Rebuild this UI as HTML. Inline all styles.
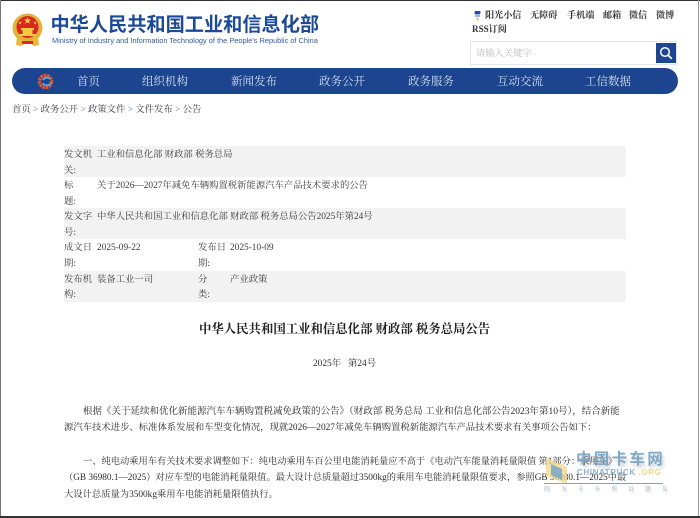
<!DOCTYPE html>
<html lang="zh"><head><meta charset="utf-8"><style>
html,body{margin:0;padding:0;background:#fff}
#p{position:relative;width:700px;height:518px;overflow:hidden;background:#fff;font-family:"Liberation Serif","Noto Serif CJK SC",serif;color:#333}
#p div{position:absolute;white-space:nowrap}
.t{font-size:9.35px;line-height:12px;color:#3c3c3c}
.b{font-size:9.35px;line-height:12px;color:#2c2c2c}
.n{font-size:11.5px;line-height:14px;color:#d5deef;top:75px}
.r{height:31px;left:64px;width:562px;background:#f2f2f2}
.h{font-size:9.1px;line-height:12px;color:#333;font-weight:bold;top:9px}
</style></head><body><div id="p">
<div style="left:0;top:0;width:700px;height:1px;background:#333"></div>
<div style="left:0;top:0;width:1px;height:518px;background:#777"></div>
<div style="left:698px;top:0;width:1px;height:518px;background:#999"></div>
<div style="left:0;top:516px;width:700px;height:2px;background:#333"></div>

<svg style="position:absolute;left:12px;top:13px" width="31" height="34" viewBox="0 0 31 34">
<ellipse cx="15.5" cy="15" rx="15" ry="14.5" fill="#e3b23c"/>
<ellipse cx="15.5" cy="14" rx="11" ry="11" fill="#d8281f"/>
<path d="M15.5 4l1 2.6h2.7l-2.2 1.6.8 2.6-2.3-1.6-2.3 1.6.8-2.6-2.2-1.6h2.7zM8 8l.5 1.3h1.4l-1.1.8.4 1.3-1.2-.8-1.1.8.4-1.3-1.1-.8h1.4zM23 8l.5 1.3h1.4l-1.1.8.4 1.3-1.2-.8-1.1.8.4-1.3-1.1-.8h1.4z" fill="#f2cf4c"/>
<path d="M9 15h13v2h-13zM10.500 17h10v4h-10zM7 21h17v2h-17z" fill="#f0c947"/>
<path d="M5 24l5 3h11l5-3 1 8-5 1-3-2h-7l-3 2-5-1z" fill="#e8b83a"/>
<path d="M10 28h11v3h-11z" fill="#d8281f"/>
</svg>
<div style="left:50.500px;top:13px;font:bold 19.2px/26px 'Liberation Sans','Noto Sans CJK SC',sans-serif;color:#1d4a96">中华人民共和国工业和信息化部</div>
<div style="left:52px;top:36px;font:7.4px/10px 'Liberation Sans',sans-serif;color:#2f5ba5">Ministry of Industry and Information Technology of the People's Republic of China</div>

<svg style="position:absolute;left:473px;top:9px" width="9" height="13" viewBox="0 0 9 13"><rect x="1.500" y="2" width="6" height="3" rx="1" fill="#2646b8"/><rect x="2" y="5" width="5" height="3" fill="#9db8e0"/><path d="M3 9h3l-1 3h-1z" fill="#e8c98a"/></svg>
<div class="h" style="left:485px">阳光小信</div>
<div class="h" style="left:530px">无障碍</div>
<div class="h" style="left:567px">手机端</div>
<div class="h" style="left:603px">邮箱</div>
<div class="h" style="left:629px">微信</div>
<div class="h" style="left:656px">微博</div>
<div class="h" style="left:472px;top:23px">RSS订阅</div>

<div style="left:470px;top:41px;width:207px;height:24px;border:1px solid #e6e6e6;box-sizing:border-box;background:#fff"></div>
<div style="left:476px;top:48px;font-size:9.3px;line-height:12px;color:#bbb">请输入关键字</div>
<div style="left:656px;top:43px;width:20px;height:20px;background:#1d4590"></div>
<svg style="position:absolute;left:658px;top:45px" width="16" height="16" viewBox="0 0 16 16"><circle cx="7" cy="7" r="4.3" fill="none" stroke="#fff" stroke-width="1.500"/><path d="M10.200 10.200l3.500 3.500" stroke="#fff" stroke-width="1.800"/></svg>

<div style="left:12px;top:68px;width:666px;height:26px;border-radius:13px;background:#1c448f"></div>
<svg style="position:absolute;left:37px;top:73px" width="18" height="17" viewBox="0 0 18 17"><circle cx="8.500" cy="8.500" r="6" fill="none" stroke="#e4572a" stroke-width="3.500" stroke-dasharray="2.500 .8"/><path d="M6 10c1 3 6 3 8 0M6 7c2-3 5-3 7-1" fill="none" stroke="#5fa8e0" stroke-width="1.800"/></svg>
<div class="n" style="left:77px">首页</div>
<div class="n" style="left:142px">组织机构</div>
<div class="n" style="left:231px">新闻发布</div>
<div class="n" style="left:319px">政务公开</div>
<div class="n" style="left:408px">政务服务</div>
<div class="n" style="left:497px">互动交流</div>
<div class="n" style="left:585px">工信数据</div>

<div class="b" style="left:12px;top:104px;font-size:9.35px;color:#3c3c3c">首页 <span style="color:#5a7fc0">&gt;</span> 政务公开 <span style="color:#5a7fc0">&gt;</span> 政策文件 <span style="color:#5a7fc0">&gt;</span> 文件发布 <span style="color:#5a7fc0">&gt;</span> 公告</div>

<div class="r" style="top:146px"></div>
<div class="r" style="top:208px"></div>
<div class="r" style="top:271px"></div>

<div class="t" style="left:64px;top:149px">发文机</div><div class="t" style="left:64px;top:165px">关:</div>
<div class="t" style="left:97px;top:149px">工业和信息化部 财政部 税务总局</div>
<div class="t" style="left:64px;top:180px">标</div><div class="t" style="left:64px;top:196px">题:</div>
<div class="t" style="left:97px;top:180px">关于2026—2027年减免车辆购置税新能源汽车产品技术要求的公告</div>
<div class="t" style="left:64px;top:211px">发文字</div><div class="t" style="left:64px;top:227px">号:</div>
<div class="t" style="left:97px;top:211px">中华人民共和国工业和信息化部 财政部 税务总局公告2025年第24号</div>
<div class="t" style="left:64px;top:242px">成文日</div><div class="t" style="left:64px;top:258px">期:</div>
<div class="t" style="left:97px;top:242px">2025-09-22</div>
<div class="t" style="left:198px;top:242px">发布日</div><div class="t" style="left:198px;top:258px">期:</div>
<div class="t" style="left:230px;top:242px">2025-10-09</div>
<div class="t" style="left:64px;top:274px">发布机</div><div class="t" style="left:64px;top:289px">构:</div>
<div class="t" style="left:97px;top:274px">装备工业一司</div>
<div class="t" style="left:198px;top:274px">分</div><div class="t" style="left:198px;top:289px">类:</div>
<div class="t" style="left:230px;top:274px">产业政策</div>

<div style="left:199px;top:321px;font-size:12.4px;line-height:16px;font-weight:bold;color:#222">中华人民共和国工业和信息化部 财政部 税务总局公告</div>
<div class="b" style="left:313px;top:358px">2025年&nbsp;&nbsp;&nbsp;第24号</div>

<div class="b" style="left:83px;top:406px;font-size:9.5px">根据《关于延续和优化新能源汽车车辆购置税减免政策的公告》（财政部 税务总局 工业和信息化部公告2023年第10号），结合新能</div>
<div class="b" style="left:64px;top:422px;font-size:9.35px">源汽车技术进步、标准体系发展和车型变化情况，现就2026—2027年减免车辆购置税新能源汽车产品技术要求有关事项公告如下：</div>
<div class="b" style="left:83px;top:456px;font-size:9.25px">一、纯电动乘用车有关技术要求调整如下：纯电动乘用车百公里电能消耗量应不高于《电动汽车能量消耗量限值 第1部分：乘用车》</div>
<div class="b" style="left:64px;top:472px;font-size:9.25px">（GB 36980.1—2025）对应车型的电能消耗量限值。最大设计总质量超过3500kg的乘用车电能消耗量限值要求，参照GB 36980.1—2025中最</div>
<div class="b" style="left:64px;top:489px;font-size:9.3px">大设计总质量为3500kg乘用车电能消耗量限值执行。</div>

<svg style="position:absolute;left:545px;top:456px" width="24" height="30" viewBox="0 0 24 30"><path d="M1 2l21 9v17l-21-8z" fill="#f3d98a" opacity=".8"/><path d="M6 8l11 5v11l-11-5z" fill="#7aa6c9" opacity=".85"/></svg>
<div style="left:576px;top:449px;font:bold 15.5px/22px 'Liberation Sans','Noto Sans CJK SC',sans-serif;color:#7fa9c6;letter-spacing:2.3px;text-shadow:2px 3px 3px rgba(120,120,120,.35)">中国卡车网</div>
<div style="left:577px;top:468px;font:bold 8px/10px 'Liberation Sans',sans-serif;color:#8fb0cb;letter-spacing:.6px">CHINATRUCK <span style="color:#f2d98e">.ORG</span></div>
<div style="left:544px;top:483px;width:119px;height:1px;background:#7fa3bd"></div>
<div style="left:544px;top:486px;font-size:6px;line-height:9px;color:#8fb0cb;letter-spacing:10.8px;text-shadow:1px 2px 2px rgba(120,120,120,.3)">四为卡车所以朋友</div>
</div></body></html>
